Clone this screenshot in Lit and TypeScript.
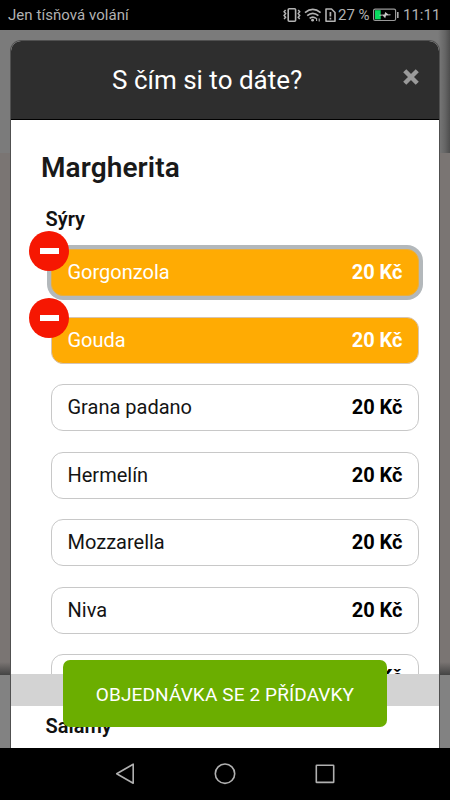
import { LitElement, html, css, nothing } from "lit";
import { customElement, property } from "lit/decorators.js";

interface Topping {
  name: string;
  selected?: boolean;
  focused?: boolean;
}

const CHEESES: Topping[] = [
  { name: "Gorgonzola", selected: true, focused: true },
  { name: "Gouda", selected: true },
  { name: "Grana padano" },
  { name: "Hermelín" },
  { name: "Mozzarella" },
  { name: "Niva" },
  { name: "" },
];

@customElement("status-bar")
class StatusBar extends LitElement {
  static styles = css`
    :host {
      display: flex;
      justify-content: space-between;
      height: 30px;
      box-sizing: border-box;
      padding: 0 11px 0 8px;
      background: #000;
      color: #b2b2b2;
      font-size: 15px;
      line-height: 31px;
      white-space: pre;
    }
    .carrier { letter-spacing: 0.05px; }
    .right { display: flex; }
    .icons { display: block; width: 56px; height: 30px; }
    .battery { display: block; width: 26px; height: 30px; margin: 0 4px 0 3px; }
    .pct { width: 32px; }
    .time { width: 36px; }
  `;
  render() {
    return html`
      <span class="carrier">Jen tísňová volání</span>
      <div class="right">
        <svg class="icons" viewBox="282 0 56 30" fill="none" stroke="#b2b2b2">
          <rect x="288.2" y="8.8" width="7.4" height="12.4" rx="1" stroke-width="1.6" />
          <path d="M285.6 10l-1.5 1.8 1.5 1.8-1.5 1.8 1.5 1.8-1.5 1.8M298.2 10l1.5 1.8-1.5 1.8 1.5 1.8-1.5 1.8 1.5 1.8" stroke-width="1.5" />
          <path d="M305 12.6q7.8-6.4 15.6 0M307.2 15.6q5.6-4.6 11.2 0M309.6 18.4q3.2-2.6 6.4 0" stroke-width="1.7" />
          <circle cx="312.6" cy="20.2" r="1.4" fill="#b2b2b2" stroke="none" />
          <path d="M316.6 18v3M319.2 18.5v3" stroke-width="1.1" />
          <path d="M326 9h5.500l3.500 3.500v8.700h-9z" stroke-width="1.6" stroke-linejoin="round" />
          <path d="M330.4 12v4.500M330.4 17.800v1.600" stroke-width="1.7" />
        </svg>
        <span class="pct">27 %</span>
        <svg class="battery" viewBox="373 0 26 30">
          <rect x="373.6" y="9.1" width="22" height="11.4" rx="1.5" fill="none" stroke="#999" stroke-width="1.2" />
          <rect x="375" y="10.2" width="5.7" height="9.2" fill="#09dc60" />
          <rect x="397" y="12" width="1.6" height="6" fill="#aaa" />
          <path d="M379.500 14.800l5-.2.700-2.600 3.300 2.400 2-.1v1l-4.500.3-.8 2.600-2.600-2.600-3.100.1z" fill="#c8c8c8" />
        </svg>
        <span class="time">11:11</span>
      </div>
    `;
  }
}

@customElement("topping-row")
class ToppingRow extends LitElement {
  @property({ attribute: false }) topping!: Topping;
  static styles = css`
    :host { display: block; }
    .row {
      position: relative;
      display: flex;
      justify-content: space-between;
      align-items: center;
      height: 47px;
      box-sizing: border-box;
      padding: 0 15.5px 1px;
      border: 1px solid #c8c8c8;
      border-radius: 12px;
      background: #fff;
      color: #141414;
      font-size: 20px;
      line-height: 24px;
    }
    .selected { background: #ffab03; color: #fff; border-color: #d5c4b5; }
    .focused { border-color: #e9ae3b; box-shadow: 0 0 0 4px #b3b8bb; }
    .price { font-weight: 700; color: #000; }
    .selected .price { color: #fff; }
    .minus {
      position: absolute;
      left: -23px;
      top: -19px;
      width: 40px;
      height: 40px;
      border-radius: 50%;
      background: #f61702;
      display: grid;
      place-items: center;
    }
    .minus:not(.raised) { top: -20px; }
    .minus::before {
      content: "";
      width: 19px;
      height: 6px;
      background: #fff;
    }
    .focused .minus { top: -19px; }
  `;
  render() {
    const t = this.topping;
    return html`
      <div class="row ${t.selected ? "selected" : ""} ${t.focused ? "focused" : ""}">
        <span>${t.name}</span>
        <span class="price">20 Kč</span>
        ${t.selected ? html`<span class="minus"></span>` : nothing}
      </div>
    `;
  }
}

@customElement("app-root")
class AppRoot extends LitElement {
  static styles = css`
    :host {
      display: flex;
      flex-direction: column;
      width: 450px;
      height: 800px;
      overflow: hidden;
      background: #000;
      font-family: Roboto, sans-serif;
    }
    .screen {
      position: relative;
      flex: 1;
      display: flex;
      overflow: hidden;
      box-sizing: border-box;
      padding: 11px 11px 0;
      background:
        linear-gradient(90deg, #7b7b7b 438px, #656565 445px, #4e4e4e 450px) 0 0 / 100% 123px no-repeat,
        linear-gradient(#828282, #828282) 0 645px / 100% 73px no-repeat,
        linear-gradient(#7a7573, #7a7573 632px, #444 645px);
    }
    .modal {
      flex: 1;
      display: flex;
      flex-direction: column;
      border-radius: 10px 10px 0 0;
      overflow: hidden;
      background: #fff;
      box-shadow: 0 0 0 1px #505050;
    }
    .header {
      display: flex;
      align-items: center;
      height: 79px;
      box-sizing: border-box;
      border-bottom: 1px solid #000;
      background: #2e2e2e;
      color: #fff;
    }
    .title {
      flex: 1;
      margin: 0 0 0 101px;
      font-size: 26px;
      line-height: 32px;
      font-weight: 400;
    }
    .close { width: 16px; height: 16px; margin: -6px 20px 0 0; }
    .list { height: 554px; overflow: hidden; }
    .pizza {
      margin: 30px 0 0 30px;
      font-size: 28px;
      line-height: 36px;
      font-weight: 600;
      letter-spacing: 0.1px;
      color: #191919;
    }
    .group {
      margin: 0;
      padding-left: 34.5px;
      font-size: 20px;
      line-height: 24px;
      font-weight: 600;
      color: #111;
    }
    .list .group { margin-top: 21px; }
    .rows {
      display: grid;
      row-gap: 20.5px;
      padding: 18px 20px 0 40px;
    }
    .gap { height: 32px; background: #d3d3d3; }
    .next { padding-top: 8px; }
    .order {
      position: absolute;
      left: 63px;
      top: 630px;
      width: 324px;
      height: 67px;
      border: 0;
      padding: 1px 0 0;
      border-radius: 7px;
      background: #6bae00;
      color: #fff;
      font: 400 19px Roboto, sans-serif;
      letter-spacing: 0.12px;
      white-space: nowrap;
    }
    .nav { display: block; height: 52px; background: #000; }
  `;
  render() {
    return html`
      <status-bar></status-bar>
      <div class="screen">
        <div class="modal">
          <div class="header">
            <h1 class="title">S čím si to dáte?</h1>
            <svg class="close" viewBox="0 0 16 16">
              <path d="M3.3 3.3l9.4 9.4M12.7 3.3L3.3 12.7" stroke="#9a9a9a" stroke-width="4.4" stroke-linecap="square" />
            </svg>
          </div>
          <div class="list">
            <h2 class="pizza">Margherita</h2>
            <h3 class="group">Sýry</h3>
            <div class="rows">
              ${CHEESES.map((t) => html`<topping-row .topping=${t}></topping-row>`)}
            </div>
          </div>
          <div class="gap"></div>
          <div class="next"><h3 class="group">Salámy</h3></div>
        </div>
        <button class="order">OBJEDNÁVKA SE 2 PŘÍDAVKY</button>
      </div>
      <svg class="nav" viewBox="0 748 450 52" fill="none" stroke="#b0b0b0" stroke-width="1.6">
        <path d="M133.2 764.2v19L116.700 773.700z" stroke-linejoin="round" />
        <circle cx="225" cy="773.7" r="9.7" />
        <rect x="316.3" y="765.2" width="17.4" height="17.2" rx=".5" />
      </svg>
    `;
  }
}
